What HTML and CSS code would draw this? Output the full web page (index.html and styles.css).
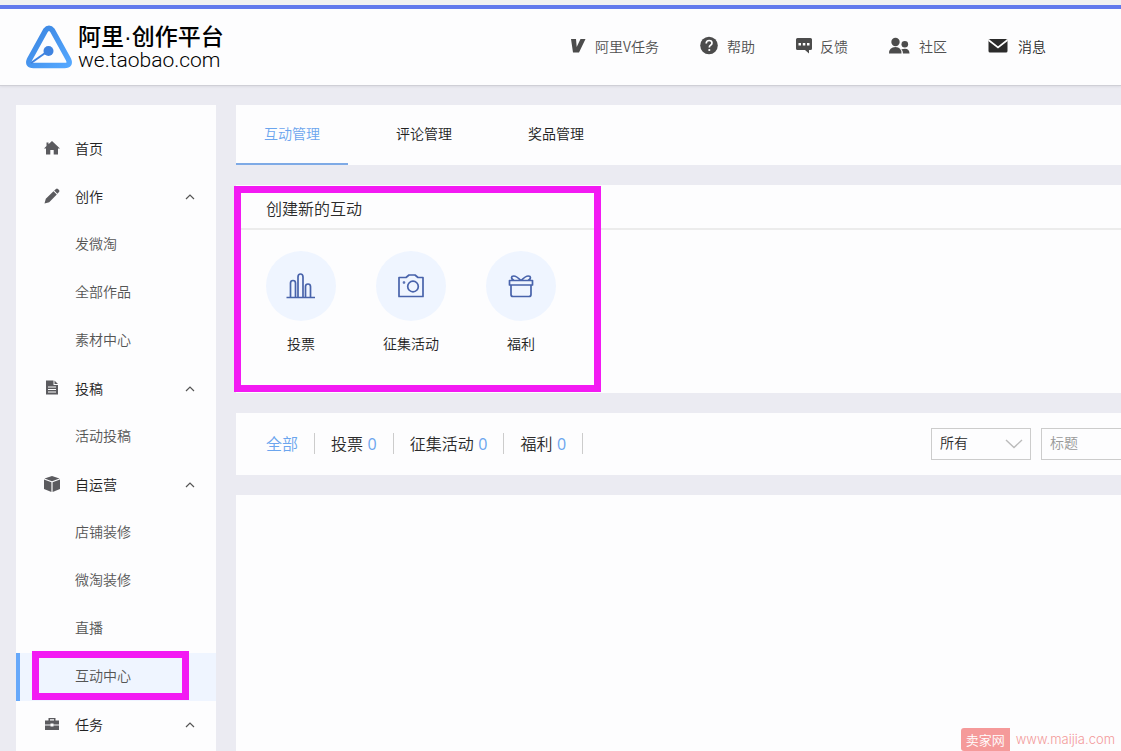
FILE: index.html
```
<!DOCTYPE html>
<html lang="zh-CN">
<head>
<meta charset="utf-8">
<title>阿里·创作平台</title>
<link rel="stylesheet" href="styles.css">
</head>
<body>
<header class="topbar">
  <a class="brand" href="#">
    <svg class="brand-mark" viewBox="0 0 46 44" aria-hidden="true">
      <defs><linearGradient id="mark" x1="0" y1="0" x2="1" y2="1"><stop offset="0" stop-color="#3a84e0"/><stop offset="1" stop-color="#55a8ff"/></linearGradient></defs>
      <path d="M19.5 5.5Q23 1 26.5 5.5L42.500 34.500Q45 40.500 38.500 40.500H7.500Q1 40.500 3.500 34.500Z" fill="none" stroke="url(#mark)" stroke-width="5.500" stroke-linejoin="round"/>
      <path d="M5 38L22 26" stroke="#3f83e0" stroke-width="2"/>
      <circle cx="22.500" cy="26" r="5" fill="#3f83e0"/>
    </svg>
    <span class="brand-text"><span class="brand-name">阿里·创作平台</span><span class="brand-url">we.taobao.com</span></span>
  </a>
  <nav class="topnav">
    <a href="#"><svg width="16" height="20" viewBox="0 0 16 20"><path d="M0 3H5L5.700 11L9.500 3H14.500L8 16.500H2Z" fill="#4c4c4c"/></svg>阿里V任务</a>
    <a href="#"><svg width="19" height="20" viewBox="0 0 19 20"><circle cx="9" cy="9.500" r="8.800" fill="#4c4c4c"/><path d="M6.200 7.500Q6.200 4.500 9.200 4.500Q12 4.500 12 7Q12 8.300 10.500 9.300Q9.300 10 9.300 11.500" fill="none" stroke="#fff" stroke-width="1.700"/><circle cx="9.300" cy="14" r="1.100" fill="#fff"/></svg>帮助</a>
    <a href="#"><svg width="16" height="20" viewBox="0 0 16 20"><path d="M1.500 2H14.500Q16 2 16 3.500V12.500Q16 14 14.500 14H13V17.500L9 14H1.500Q0 14 0 12.500V3.500Q0 2 1.500 2Z" fill="#4c4c4c"/><path d="M2.500 7h2.500v2.500H2.500zM6.800 7h2.500v2.500H6.800zM11 7h2.500v2.500H11z" fill="#fff"/></svg>反馈</a>
    <a href="#"><svg width="22" height="20" viewBox="0 0 22 20" fill="#4c4c4c"><circle cx="6.500" cy="6" r="4.200"/><path d="M0 17.500Q0 11 6.500 11Q12.500 11 12.500 17.500Z"/><circle cx="15.800" cy="8.300" r="3.300"/><path d="M14 17.500Q14 14.500 12.300 13.200Q20.500 11 20.500 17.500Z"/></svg>社区</a>
    <a class="strong" href="#"><svg width="22" height="20" viewBox="0 0 22 20"><rect x="0.500" y="3" width="19" height="13.500" rx="1.500" fill="#2b2b2b"/><path d="M0.500 4L10 11.500L19.500 4" fill="none" stroke="#fff" stroke-width="1.600"/></svg>消息</a>
  </nav>
</header>
<div class="layout">
  <nav class="sidebar">
    <a class="group" href="#"><svg class="gi" viewBox="0 0 16 16"><path d="M8 1L16 8.500H14V14.500H9.700V10H6.300V14.500H2V8.500H0L2.500 6V2.500H4.500V4.300Z"/></svg>首页</a>
    <button class="group" type="button"><svg class="gi" viewBox="0 0 16 16"><path d="M.5 15.500L1.800 10.800L9.500 3.200L12.800 6.500L5.200 14.200ZM10.200 2.600L12 .900Q13 0 14.200 1.200L15 2Q16 3 15 4.100L13.400 5.800Z"/></svg>创作<svg class="chev" viewBox="0 0 10 8"><path d="M1 6L5 2L9 6"/></svg></button>
    <a class="sub" href="#">发微淘</a>
    <a class="sub" href="#">全部作品</a>
    <a class="sub" href="#">素材中心</a>
    <button class="group" type="button"><svg class="gi" viewBox="0 0 16 16"><path d="M2 .5H9.500V5H14V14.500H2ZM10.500 .5L14 4H10.500Z"/><path d="M4 7h8M4 9.500h8M4 12h8" stroke="#fff"/></svg>投稿<svg class="chev" viewBox="0 0 10 8"><path d="M1 6L5 2L9 6"/></svg></button>
    <a class="sub" href="#">活动投稿</a>
    <button class="group" type="button"><svg class="gi" viewBox="0 0 16 16"><path d="M8 0L15.500 2.500L8 5.200L.5 2.500ZM0 3.600L7.400 6.300V16L0 13ZM16 3.600L8.600 6.300V16L16 13Z"/></svg>自运营<svg class="chev" viewBox="0 0 10 8"><path d="M1 6L5 2L9 6"/></svg></button>
    <a class="sub" href="#">店铺装修</a>
    <a class="sub" href="#">微淘装修</a>
    <a class="sub" href="#">直播</a>
    <a class="sub active" href="#" aria-current="page">互动中心<span class="mark mark-side"></span></a>
    <button class="group" type="button"><svg class="gi" viewBox="0 0 16 16"><path d="M4.500 4.500V2H11.500V4.500H15V8.500H9.500V7.500H6.500V8.500H1V4.500ZM6 4.500H10V3.300H6ZM1 9.500H6.500V10.500H9.500V9.500H15V14H1Z" fill-rule="evenodd"/></svg>任务<svg class="chev" viewBox="0 0 10 8"><path d="M1 6L5 2L9 6"/></svg></button>
  </nav>
  <main class="main">
    <nav class="card tabs">
      <a class="tab selected" href="#">互动管理</a>
      <a class="tab" href="#">评论管理</a>
      <a class="tab" href="#">奖品管理</a>
    </nav>
    <section class="card create">
      <h2 class="create-title">创建新的互动</h2>
      <div class="tiles">
        <a class="tile" href="#"><span class="disc"><svg width="30" height="30" viewBox="0 0 30 30"><path d="M.5 26.500H29M4.500 26V12Q4.500 9.500 7 9.500T9.500 12V26M12 26V6Q12 3 14.500 3T17 6V26M19.500 26V15.500Q19.500 13 22 13T24.500 15.500V26"/></svg></span>投票</a>
        <a class="tile" href="#"><span class="disc"><svg width="30" height="30" viewBox="0 0 30 30"><path d="M3 6.500H10L13 4H19L22 6.500H27V25.500H3Z"/><circle cx="17" cy="15.500" r="5.300"/><circle cx="8" cy="11.500" r=".5"/></svg></span>征集活动</a>
        <a class="tile" href="#"><span class="disc"><svg width="30" height="30" viewBox="0 0 30 30"><path d="M3.500 9.500H26.500V14H3.500ZM5 14V23.500Q5 25.500 7 25.500H23Q25 25.500 25 23.500V14M15 9.500Q9 3.500 6 5.500Q4.500 7.500 8 9.500M15 9.500Q21 3.500 24 5.500Q25.500 7.500 22 9.500"/></svg></span>福利</a>
      </div>
      <span class="mark mark-create"></span>
    </section>
    <section class="card filter">
      <div class="kinds">
        <a class="kind on" href="#">全部</a>
        <a class="kind" href="#">投票 <b>0</b></a>
        <a class="kind" href="#">征集活动 <b>0</b></a>
        <a class="kind" href="#">福利 <b>0</b></a>
      </div>
      <div class="fields">
        <span class="select-wrap"><select class="field" aria-label="状态"><option>所有</option></select><svg class="arrow" viewBox="0 0 18 10"><path d="M1 1L9 8.500L17 1"/></svg></span>
        <input class="field search" type="text" aria-label="标题" placeholder="标题">
      </div>
    </section>
    <section class="card results"></section>
  </main>
</div>
<a class="watermark" href="#"><span class="wm-tag">卖家网</span><span class="wm-url">www.maijia.com</span></a>
</body>
</html>
```
FILE: styles.css
```
* { box-sizing: border-box; }
body {
  margin: 0;
  height: 100vh;
  display: flex;
  flex-direction: column;
  overflow: hidden;
  position: relative;
  background: #ebebf2;
  color: #2b2b2b;
  font: 350 14px/20px "Noto Sans CJK SC", sans-serif;
}
a { color: inherit; text-decoration: none; }
button { font: inherit; color: inherit; border: 0; background: none; text-align: left; }

.topbar {
  flex: none;
  display: flex;
  align-items: center;
  justify-content: space-between;
  height: 81px;
  margin-top: 5px;
  padding: 0 75px 0 26px;
  background: #fdfdfe;
  border-top: 4px solid #6179ec;
  border-bottom: 1px solid #cfcfd6;
  box-shadow: 0 -5px 0 #f0f1f1, 0 1px 2px #dcdce4;
}
.brand { display: flex; align-items: center; gap: 6px; color: #000; }
.brand-mark { width: 46px; height: 44px; }
.brand-text { display: flex; flex-direction: column; padding-top: 2px; }
.brand-name { font: 500 23px/24px "Liberation Sans", "Noto Sans CJK SC", sans-serif; }
.brand-url { font: 300 21px/22px Roboto, sans-serif; }
.topnav { display: flex; gap: 41px; padding-bottom: 2px; color: #505050; }
.topnav a { display: flex; align-items: center; gap: 8px; }
.topnav .strong { color: #2b2b2b; }

.layout { flex: 1; min-height: 0; display: flex; gap: 20px; padding: 19px 0 0 16px; }
.sidebar {
  flex: none;
  width: 200px;
  padding-top: 20px;
  display: flex;
  flex-direction: column;
  background: #fdfdfe;
}
.group, .sub { flex: none; display: flex; align-items: center; height: 48px; }
.group { padding: 0 21px 2px 28px; color: #222; }
.gi { width: 16px; height: 16px; margin-right: 15px; fill: #5b5b5f; }
.chev { width: 10px; height: 8px; margin-top: 2px; margin-left: auto; fill: none; stroke: #555; stroke-width: 1.2; }
.sub { padding: 0 0 4px 59px; color: #555; }
.active { position: relative; padding-left: 55px; border-left: 4px solid #66a8fa; background: #eff5ff; }
.mark { position: absolute; border: 7px solid #f31af3; pointer-events: none; }
.mark-side { left: 12px; top: -2px; width: 157px; height: 49px; }
.mark-create { left: -2px; top: 1px; width: 367px; height: 206px; }

.main { flex: 1; min-width: 0; display: flex; flex-direction: column; gap: 20px; }
.card { background: #fdfdfe; }
.tabs { display: flex; gap: 20px; height: 60px; }
.tab { display: flex; align-items: center; padding: 0 28px 2px; border-bottom: 2px solid transparent; color: #222; }
.selected { color: #6ba5ee; border-color: #7eaae6; }

.create { position: relative; height: 208px; }
.create-title { margin: 0; padding: 11px 30px 8px; font-size: 16px; line-height: 24px; font-weight: 350; border-bottom: 2px solid #ececec; }
.tiles { display: flex; gap: 40px; padding: 21px 30px; }
.tile { display: flex; flex-direction: column; align-items: center; gap: 12px; width: 70px; color: #222; }
.disc { display: flex; align-items: center; justify-content: center; width: 70px; height: 70px; border-radius: 50%; background: #eff5ff; }
.disc svg { fill: none; stroke: #4863ab; stroke-width: 1.7; stroke-linejoin: round; }

.filter { display: flex; align-items: center; justify-content: space-between; height: 62px; padding-left: 14px; }
.kinds { display: flex; padding-bottom: 2px; font-size: 16px; line-height: 20px; }
.kind { padding: 0 16px; border-right: 1px solid #ccc; }
.kind b { margin-left: 1px; font-family: "Open Sans", sans-serif; font-weight: 400; color: #6ba5ee; }
.kind.on { color: #6ba5ee; }
.fields { display: flex; gap: 10px; }
.field { height: 32px; padding: 0 8px 4px; font: inherit; color: #2b2b2b; background: #fdfdfe; border: 1px solid #ccc; border-radius: 0; }
.select-wrap { position: relative; }
.select-wrap .field { width: 100px; appearance: none; }
.arrow { position: absolute; right: 8px; top: 11px; width: 18px; height: 10px; fill: none; stroke: #bbb; stroke-width: 1.4; pointer-events: none; }
.search { width: 80px; border-right: 0; }
.search::placeholder { color: #999; opacity: 1; }
.results { flex: 1; }

.watermark { position: absolute; right: 6px; bottom: 0; display: flex; gap: 6px; color: #f39a9a; font-size: 13px; line-height: 23px; }
.wm-tag { padding: 0 5px; color: #fff; background: #f59a9a; border-radius: 3px 0 0 3px; }
.wm-url { font-family: Inter, sans-serif; }
```
